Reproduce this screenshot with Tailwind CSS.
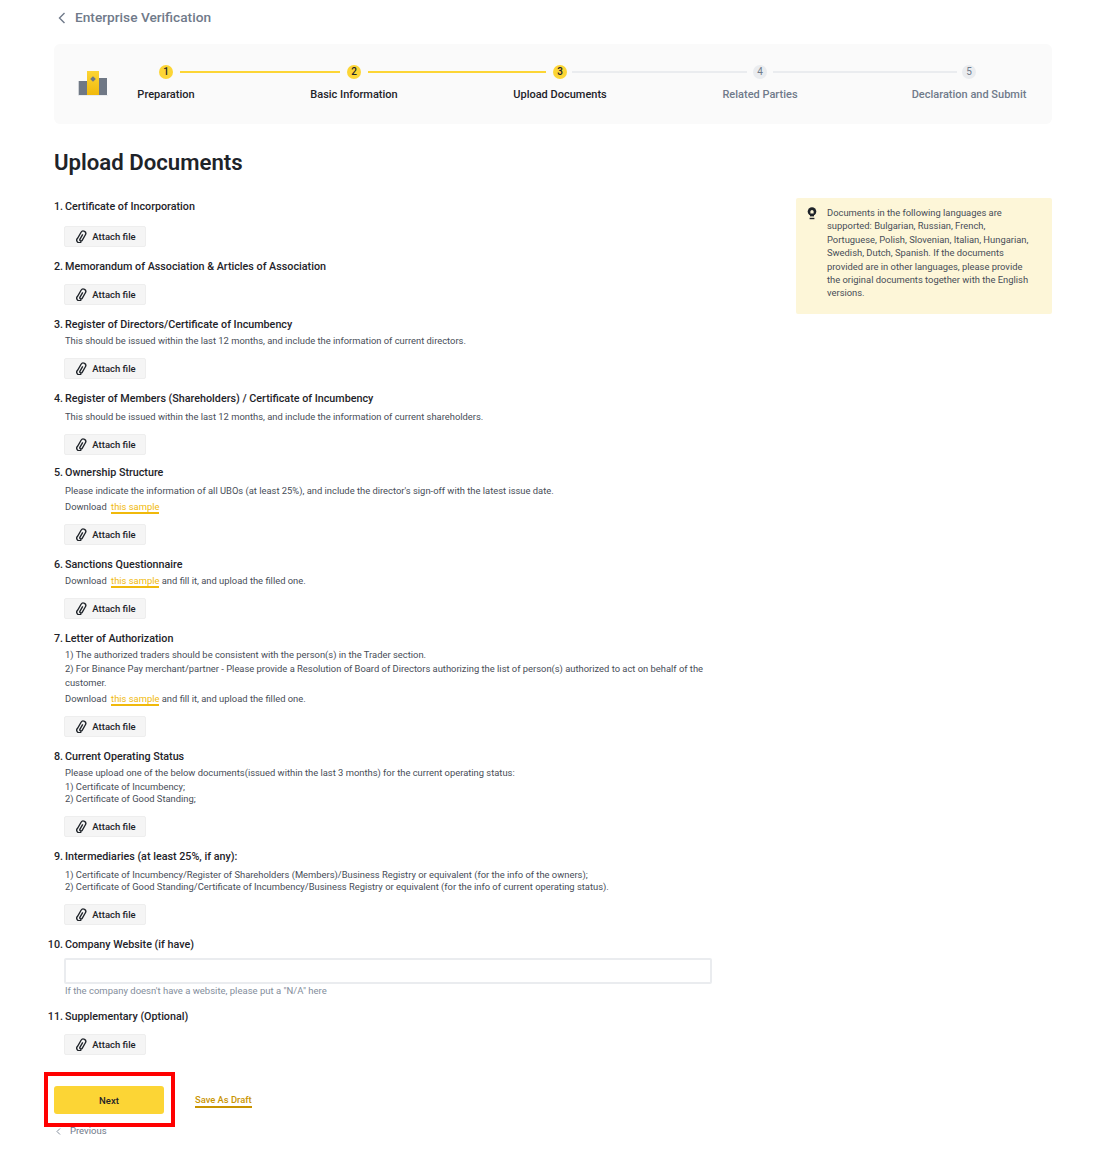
<!DOCTYPE html>
<html lang="en">
<head>
  <meta charset="UTF-8" />
  <title>Enterprise Verification</title>
  <script src="https://cdn.jsdelivr.net/npm/@tailwindcss/browser@4"></script>
</head>
<body class="bg-white font-['Roboto',sans-serif] text-[#1e2329]">
  <!-- Shared paperclip icon -->
  <svg class="hidden">
    <symbol id="clip" viewBox="0 0 11 13"><path transform="rotate(30 5.5 6.5)" d="M5.5 4 V9.5 A1.25 1.25 0 0 0 8 9.5 V3 A2.5 2.5 0 0 0 3 3 V10 A2.5 2.5 0 0 0 8 11.5" fill="none" stroke="#1e2329" stroke-width="1.35"/></symbol>
  </svg>

  <div class="w-[1114px] h-[1154px] overflow-hidden pl-[54px] pt-[8px]">
    <!-- Header -->
    <div class="flex items-center h-[19px] gap-[8px] pl-[3px]">
      <svg class="w-[10px] h-[12px]" viewBox="0 0 10 12" fill="none" stroke="#707a8a" stroke-width="1.4"><path d="M7.5 1 L2.5 6 L7.5 11"/></svg>
      <span class="text-[13.7px] leading-[19px] font-medium text-[#707a8a]">Enterprise Verification</span>
    </div>

    <!-- Stepper -->
    <div class="mt-[17px] w-[998px] h-[80px] rounded-[6px] bg-[#fafafa] relative flex">
      <svg class="w-[30px] h-[25px] ml-[24px] mt-[27px] shrink-0" viewBox="0 0 30 25">
        <defs><linearGradient id="tower" x1="0" y1="0" x2="0" y2="1"><stop offset="0" stop-color="#fcd535"/><stop offset="1" stop-color="#f0b90b"/></linearGradient></defs>
        <rect x="0.7" y="10" width="8.3" height="14" fill="#6f7885"/>
        <rect x="21" y="7" width="8" height="17" fill="#6f7885"/>
        <rect x="9" y="0" width="12" height="24" fill="url(#tower)"/>
        <rect x="13" y="6" width="4" height="4" transform="rotate(45 15 8)" fill="#6f7885"/>
        <rect x="0" y="24" width="30" height="1" fill="#eaecef"/>
      </svg>
      <div class="ml-[27px]">
        <div class="flex items-center h-[14px] mt-[21px] w-[860px]">
          <span class="shrink-0 ml-[24px] w-[14px] h-[14px] rounded-full bg-[#fcd535] text-[10px] leading-[14px] font-medium text-center">1</span>
          <span class="shrink-0 ml-[7px] w-[160px] h-[2px] bg-[#fcd535]"></span>
          <span class="shrink-0 ml-[7px] w-[14px] h-[14px] rounded-full bg-[#fcd535] text-[10px] leading-[14px] font-medium text-center">2</span>
          <span class="shrink-0 ml-[7px] w-[178px] h-[2px] bg-[#fcd535]"></span>
          <span class="shrink-0 ml-[7px] w-[14px] h-[14px] rounded-full bg-[#fcd535] text-[10px] leading-[14px] font-medium text-center">3</span>
          <span class="shrink-0 ml-[5px] w-[175px] h-[2px] bg-[#eaecef]"></span>
          <span class="shrink-0 ml-[6px] w-[14px] h-[14px] rounded-full bg-[#eaecef] text-[#707a8a] text-[10px] leading-[14px] text-center">4</span>
          <span class="shrink-0 ml-[6px] w-[184px] h-[2px] bg-[#eaecef]"></span>
          <span class="shrink-0 ml-[5px] w-[14px] h-[14px] rounded-full bg-[#eaecef] text-[#707a8a] text-[10px] leading-[14px] text-center">5</span>
        </div>
        <div class="flex mt-[8px] text-[11px] leading-[16px] font-medium text-center whitespace-nowrap">
          <span class="w-[100px] -ml-[19px] mr-[88px]">Preparation</span>
          <span class="w-[100px] mr-[106px]">Basic Information</span>
          <span class="w-[100px] mr-[100px]">Upload Documents</span>
          <span class="w-[100px] mr-[109px] text-[#707a8a]">Related Parties</span>
          <span class="w-[100px] flex justify-center text-[#707a8a]">Declaration and Submit</span>
        </div>
      </div>
    </div>

    <h1 class="mt-[25px] text-[22.2px] leading-[26px] font-semibold">Upload Documents</h1>

    <div class="flex mt-[23px]">
      <!-- Document list -->
      <div class="w-[658px] pl-[11px] text-[9.38px] leading-[14px] text-[#474d57]">
        <div class="flex h-[16px] text-[10.75px] leading-[18px] font-medium text-[#1e2329]"><span class="w-[20px] -ml-[22px] mr-[2px] text-right">1.</span>Certificate of Incorporation</div>
        <button class="-ml-[1px] mt-[12px] pl-[2px] flex items-center justify-center gap-[5px] w-[82px] h-[21px] rounded-[2px] bg-[#f5f5f5] border border-[#eeeeee] text-[9.5px] font-medium text-[#1e2329]"><svg class="w-[11px] h-[13px]"><use href="#clip"/></svg>Attach file</button>

        <div class="mt-[11px] flex h-[16px] text-[10.75px] leading-[18px] font-medium text-[#1e2329]"><span class="w-[20px] -ml-[22px] mr-[2px] text-right">2.</span>Memorandum of Association &amp; Articles of Association</div>
        <button class="-ml-[1px] mt-[10px] pl-[2px] flex items-center justify-center gap-[5px] w-[82px] h-[21px] rounded-[2px] bg-[#f5f5f5] border border-[#eeeeee] text-[9.5px] font-medium text-[#1e2329]"><svg class="w-[11px] h-[13px]"><use href="#clip"/></svg>Attach file</button>

        <div class="mt-[11px] flex h-[16px] text-[10.75px] leading-[18px] font-medium text-[#1e2329]"><span class="w-[20px] -ml-[22px] mr-[2px] text-right">3.</span>Register of Directors/Certificate of Incumbency</div>
        <p class="mt-[2px]">This should be issued within the last 12 months, and include the information of current directors.</p>
        <button class="-ml-[1px] mt-[10px] pl-[2px] flex items-center justify-center gap-[5px] w-[82px] h-[21px] rounded-[2px] bg-[#f5f5f5] border border-[#eeeeee] text-[9.5px] font-medium text-[#1e2329]"><svg class="w-[11px] h-[13px]"><use href="#clip"/></svg>Attach file</button>

        <div class="mt-[11px] flex h-[16px] text-[10.75px] leading-[18px] font-medium text-[#1e2329]"><span class="w-[20px] -ml-[22px] mr-[2px] text-right">4.</span>Register of Members (Shareholders) / Certificate of Incumbency</div>
        <p class="mt-[4px]">This should be issued within the last 12 months, and include the information of current shareholders.</p>
        <button class="-ml-[1px] mt-[10px] pl-[2px] flex items-center justify-center gap-[5px] w-[82px] h-[21px] rounded-[2px] bg-[#f5f5f5] border border-[#eeeeee] text-[9.5px] font-medium text-[#1e2329]"><svg class="w-[11px] h-[13px]"><use href="#clip"/></svg>Attach file</button>

        <div class="mt-[9px] flex h-[16px] text-[10.75px] leading-[18px] font-medium text-[#1e2329]"><span class="w-[20px] -ml-[22px] mr-[2px] text-right">5.</span>Ownership Structure</div>
        <p class="mt-[4px]">Please indicate the information of all UBOs (at least 25%), and include the director's sign-off with the latest issue date.</p>
        <p class="mt-[2px] h-[14px]">Download <a class="ml-[2px] text-[#f0b90b] border-b-2 border-[#f0b90b]">this sample</a></p>
        <button class="-ml-[1px] mt-[10px] pl-[2px] flex items-center justify-center gap-[5px] w-[82px] h-[21px] rounded-[2px] bg-[#f5f5f5] border border-[#eeeeee] text-[9.5px] font-medium text-[#1e2329]"><svg class="w-[11px] h-[13px]"><use href="#clip"/></svg>Attach file</button>

        <div class="mt-[11px] flex h-[16px] text-[10.75px] leading-[18px] font-medium text-[#1e2329]"><span class="w-[20px] -ml-[22px] mr-[2px] text-right">6.</span>Sanctions Questionnaire</div>
        <p class="mt-[2px] h-[14px]">Download <a class="ml-[2px] text-[#f0b90b] border-b-2 border-[#f0b90b]">this sample</a> and fill it, and upload the filled one.</p>
        <button class="-ml-[1px] mt-[10px] pl-[2px] flex items-center justify-center gap-[5px] w-[82px] h-[21px] rounded-[2px] bg-[#f5f5f5] border border-[#eeeeee] text-[9.5px] font-medium text-[#1e2329]"><svg class="w-[11px] h-[13px]"><use href="#clip"/></svg>Attach file</button>

        <div class="mt-[11px] flex h-[16px] text-[10.75px] leading-[18px] font-medium text-[#1e2329]"><span class="w-[20px] -ml-[22px] mr-[2px] text-right">7.</span>Letter of Authorization</div>
        <p class="mt-[2px]">1) The authorized traders should be consistent with the person(s) in the Trader section.</p>
        <p>2) For Binance Pay merchant/partner - Please provide a Resolution of Board of Directors authorizing the list of person(s) authorized to act on behalf of the customer.</p>
        <p class="mt-[2px] h-[14px]">Download <a class="ml-[2px] text-[#f0b90b] border-b-2 border-[#f0b90b]">this sample</a> and fill it, and upload the filled one.</p>
        <button class="-ml-[1px] mt-[10px] pl-[2px] flex items-center justify-center gap-[5px] w-[82px] h-[21px] rounded-[2px] bg-[#f5f5f5] border border-[#eeeeee] text-[9.5px] font-medium text-[#1e2329]"><svg class="w-[11px] h-[13px]"><use href="#clip"/></svg>Attach file</button>

        <div class="mt-[11px] flex h-[16px] text-[10.75px] leading-[18px] font-medium text-[#1e2329]"><span class="w-[20px] -ml-[22px] mr-[2px] text-right">8.</span>Current Operating Status</div>
        <p class="mt-[2px]">Please upload one of the below documents(issued within the last 3 months) for the current operating status:</p>
        <p>1) Certificate of Incumbency;</p>
        <p class="-mt-[2px]">2) Certificate of Good Standing;</p>
        <button class="-ml-[1px] mt-[10px] pl-[2px] flex items-center justify-center gap-[5px] w-[82px] h-[21px] rounded-[2px] bg-[#f5f5f5] border border-[#eeeeee] text-[9.5px] font-medium text-[#1e2329]"><svg class="w-[11px] h-[13px]"><use href="#clip"/></svg>Attach file</button>

        <div class="mt-[11px] flex h-[16px] text-[10.75px] leading-[18px] font-medium text-[#1e2329]"><span class="w-[20px] -ml-[22px] mr-[2px] text-right">9.</span>Intermediaries (at least 25%, if any):</div>
        <p class="mt-[4px]">1) Certificate of Incumbency/Register of Shareholders (Members)/Business Registry or equivalent (for the info of the owners);</p>
        <p class="-mt-[2px]">2) Certificate of Good Standing/Certificate of Incumbency/Business Registry or equivalent (for the info of current operating status).</p>
        <button class="-ml-[1px] mt-[10px] pl-[2px] flex items-center justify-center gap-[5px] w-[82px] h-[21px] rounded-[2px] bg-[#f5f5f5] border border-[#eeeeee] text-[9.5px] font-medium text-[#1e2329]"><svg class="w-[11px] h-[13px]"><use href="#clip"/></svg>Attach file</button>

        <div class="mt-[11px] flex h-[16px] text-[10.75px] leading-[18px] font-medium text-[#1e2329]"><span class="w-[20px] -ml-[22px] mr-[2px] text-right">10.</span>Company Website (if have)</div>
        <input class="-ml-[1px] mt-[6px] block w-[648px] h-[26px] rounded-[2px] border-2 border-[#eaecef] bg-white" type="text" />
        <p class="text-[9.5px] text-[#848e9c]">If the company doesn't have a website, please put a "N/A" here</p>

        <div class="mt-[10px] flex h-[16px] text-[10.75px] leading-[18px] font-medium text-[#1e2329]"><span class="w-[20px] -ml-[22px] mr-[2px] text-right">11.</span>Supplementary (Optional)</div>
        <button class="-ml-[1px] mt-[10px] pl-[2px] flex items-center justify-center gap-[5px] w-[82px] h-[21px] rounded-[2px] bg-[#f5f5f5] border border-[#eeeeee] text-[9.5px] font-medium text-[#1e2329]"><svg class="w-[11px] h-[13px]"><use href="#clip"/></svg>Attach file</button>

        <!-- Actions -->
        <div class="mt-[17px] -ml-[21px] flex items-center">
          <div class="w-[131px] h-[55px] border-[4px] border-[#ff0000] pl-[6px] pt-[10px]">
            <button class="block w-[110px] h-[28px] pt-[1px] rounded-[3px] bg-[#fcd535] text-[9.5px] font-medium text-[#1e2329]">Next</button>
          </div>
          <a class="ml-[20px] mt-[3px] text-[9.4px] leading-[12px] font-medium text-[#c99400] border-b-2 border-[#c99400]">Save As Draft</a>
        </div>
        <div class="flex items-center gap-[9px] -ml-[9px] mt-[-3px] text-[9.5px] leading-[14px] text-[#707a8a]">
          <svg class="w-[5px] h-[7px]" viewBox="0 0 5 7" fill="none" stroke="#848e9c"><path d="M4 .5 L1 3.5 L4 6.5"/></svg>
          <span>Previous</span>
        </div>
      </div>

      <!-- Notice -->
      <aside class="ml-[84px] w-[256px] h-[116px] rounded-[2px] bg-[#fdf6d8] flex pl-[11px] pr-[18px] pt-[8px] text-[9.4px] leading-[13.4px] text-[#474d57]">
        <svg class="w-[10px] h-[13px] mt-[1px] mr-[10px] shrink-0" viewBox="0 0 10 13"><circle cx="5" cy="4.5" r="4.3" fill="#1e2329"/><rect x="3" y="7" width="4" height="2.4" fill="#1e2329"/><path d="M3.4 6.4 V4.6 A1.6 1.6 0 0 1 6.6 4.6 V6.4 Z" fill="#fdf6d8"/><rect x="2.6" y="10.8" width="4.8" height="1.4" fill="#1e2329"/></svg>
        <p>Documents in the following languages are supported: Bulgarian, Russian, French, Portuguese, Polish, Slovenian, Italian, Hungarian, Swedish, Dutch, Spanish. If the documents provided are in other languages, please provide the original documents together with the English versions.</p>
      </aside>
    </div>
  </div>
</body>
</html>
